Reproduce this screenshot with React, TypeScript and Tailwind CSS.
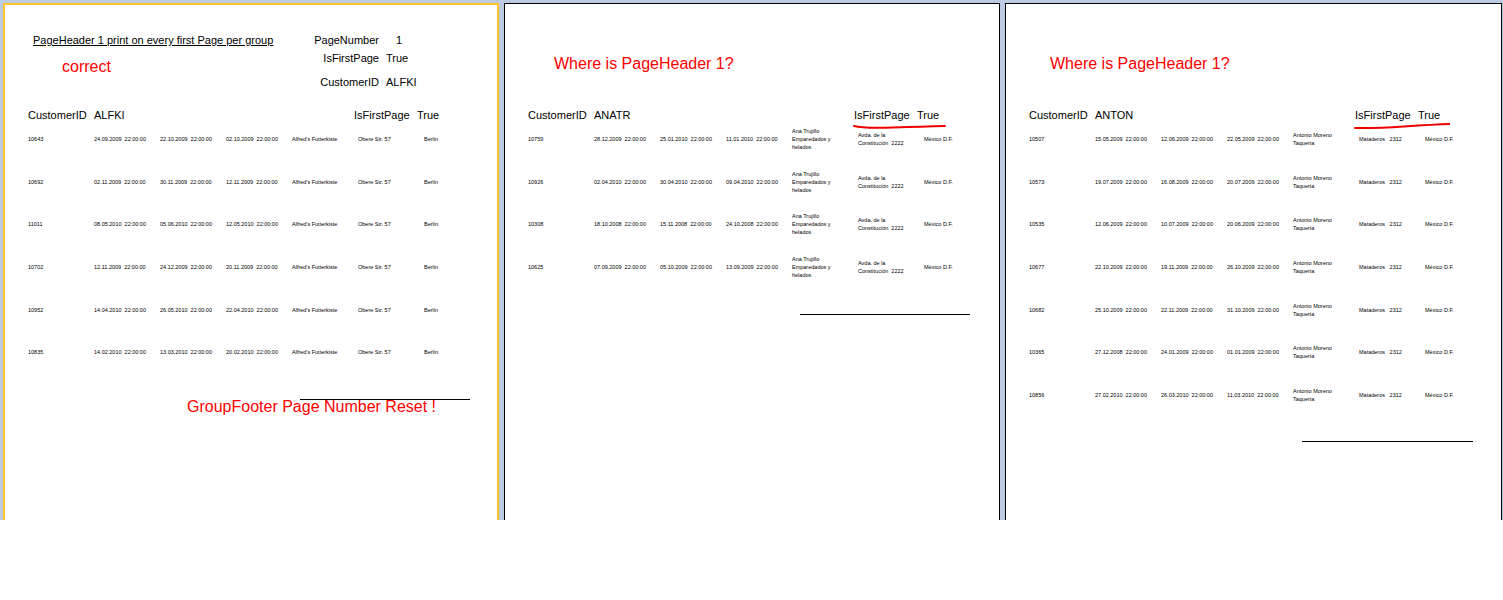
import React from "react";

type Row = { id: string; d: [string, string, string]; c: string[]; a: string[]; city: string };

const p1c = ["Alfred's Futterkiste"];
const p1a = ["Obere Str. 57"];
const page1: Row[] = [
  ["10643", "24.09.2009", "22.10.2009", "02.10.2009"],
  ["10692", "02.11.2009", "30.11.2009", "12.11.2009"],
  ["11011", "08.05.2010", "05.06.2010", "12.05.2010"],
  ["10702", "12.11.2009", "24.12.2009", "20.11.2009"],
  ["10952", "14.04.2010", "26.05.2010", "22.04.2010"],
  ["10835", "14.02.2010", "13.03.2010", "20.02.2010"],
].map(([id, a, b, c]) => ({ id, d: [a, b, c], c: p1c, a: p1a, city: "Berlin" }));

const page2: Row[] = [
  ["10759", "28.12.2009", "25.01.2010", "11.01.2010"],
  ["10926", "02.04.2010", "30.04.2010", "09.04.2010"],
  ["10308", "18.10.2008", "15.11.2008", "24.10.2008"],
  ["10625", "07.09.2009", "05.10.2009", "13.09.2009"],
].map(([id, a, b, c]) => ({
  id,
  d: [a, b, c],
  c: ["Ana Trujillo", "Emparedados y", "helados"],
  a: ["Avda. de la", "Constitución  2222"],
  city: "México D.F.",
}));

const page3: Row[] = [
  ["10507", "15.05.2009", "12.06.2009", "22.05.2009"],
  ["10573", "19.07.2009", "16.08.2009", "20.07.2009"],
  ["10535", "12.06.2009", "10.07.2009", "20.06.2009"],
  ["10677", "22.10.2009", "19.11.2009", "26.10.2009"],
  ["10682", "25.10.2009", "22.11.2009", "31.10.2009"],
  ["10365", "27.12.2008", "24.01.2009", "01.01.2009"],
  ["10856", "27.02.2010", "26.03.2010", "11.03.2010"],
].map(([id, a, b, c]) => ({
  id,
  d: [a, b, c],
  c: ["Antonio Moreno", "Taquería"],
  a: ["Mataderos   2312"],
  city: "México D.F.",
}));

function Rows({ rows }: { rows: Row[] }) {
  return (
    <div className="mt-[5px] flex flex-col gap-[18.67px] pl-[23px] text-[5.5px] leading-[8px] font-medium text-black">
      {rows.map((r) => (
        <div key={r.id} className="grid h-[24px] grid-cols-[66px_66px_66px_66px_66px_66px_66px] items-center">
          <div>{r.id}</div>
          {r.d.map((x, i) => (
            <div key={i} className="whitespace-pre">{x + "  22:00:00"}</div>
          ))}
          <div>{r.c.map((l, i) => <div key={i}>{l}</div>)}</div>
          <div className="whitespace-pre">{r.a.map((l, i) => <div key={i}>{l}</div>)}</div>
          <div>{r.city}</div>
        </div>
      ))}
    </div>
  );
}

function GroupHeader({ id, mark }: { id: string; mark?: "a" | "b" }) {
  return (
    <div className="flex pl-[23px] text-[11px] leading-[14px]">
      <div className="w-[66px]">CustomerID</div>
      <div className="w-[260px]">{id}</div>
      <div className="relative flex">
        <div className="w-[63px]">IsFirstPage</div>
        <div>True</div>
        {mark && (
          <svg className="absolute left-[-1px] top-[14px]" width="96" height="8" viewBox="0 0 96 8">
            {mark === "a" ? (
              <path d="M1 4 Q 10 6.5 40 5.5 T 92 4" stroke="#e00" strokeWidth="2" fill="none" strokeLinecap="round" />
            ) : (
              <path d="M1 6 Q 20 6.5 50 4.5 T 96 2" stroke="#e00" strokeWidth="2" fill="none" strokeLinecap="round" />
            )}
          </svg>
        )}
      </div>
    </div>
  );
}

function FooterLine() {
  return <div className="ml-[295px] mt-[35px] w-[170px] border-t border-black" />;
}

export default function App() {
  const font = { fontFamily: '"Liberation Sans", Arial, sans-serif' };
  return (
    <div style={font} className="h-[600px] w-[1503px] bg-white text-black">
      <div className="flex h-[520px] gap-[5px] bg-[#bccbe0] pl-[3px] pt-[3px]">
        {/* Page 1 */}
        <div className="w-[496px] shrink-0 border-2 border-b-0 border-[#ffc425] bg-white">
          <div className="flex pt-[28px]">
            <div className="w-[307px] shrink-0 pl-[28px]">
              <div className="whitespace-nowrap text-[11px] leading-[14px] underline">PageHeader 1 print on every first Page per group</div>
              <div className="ml-[29px] mt-[11px] text-[16px] leading-[18px] text-[#ff0000]">correct</div>
            </div>
            <div className="grid grid-cols-[67px_auto] gap-x-[7px] text-[11px] leading-[14px]">
              <div className="text-right">PageNumber</div>
              <div className="pl-[10px]">1</div>
              <div className="mt-[4px] text-right">IsFirstPage</div>
              <div className="mt-[4px]">True</div>
              <div className="mt-[10px] text-right">CustomerID</div>
              <div className="mt-[10px]">ALFKI</div>
            </div>
          </div>
          <div className="mt-[19px]">
            <GroupHeader id="ALFKI" />
          </div>
          <Rows rows={page1} />
          <FooterLine />
          <div className="ml-[182px] -mt-[2px] whitespace-nowrap text-[16px] leading-[18px] text-[#ff0000]">GroupFooter Page Number Reset !</div>
        </div>
        {/* Page 2 */}
        <div className="w-[496px] shrink-0 border border-b-0 border-black bg-white">
          <div className="ml-[49px] mt-[51px] text-[16px] leading-[18px] text-[#ff0000]">Where is PageHeader 1?</div>
          <div className="mt-[35px]">
            <GroupHeader id="ANATR" mark="a" />
          </div>
          <Rows rows={page2} />
          <FooterLine />
        </div>
        {/* Page 3 */}
        <div className="mr-[1px] flex-1 border border-b-0 border-black bg-white">
          <div className="ml-[44px] mt-[51px] text-[16px] leading-[18px] text-[#ff0000]">Where is PageHeader 1?</div>
          <div className="mt-[35px]">
            <GroupHeader id="ANTON" mark="b" />
          </div>
          <Rows rows={page3} />
          <div className="ml-[296px] mt-[34px] w-[171px] border-t border-black" />
        </div>
      </div>
    </div>
  );
}
